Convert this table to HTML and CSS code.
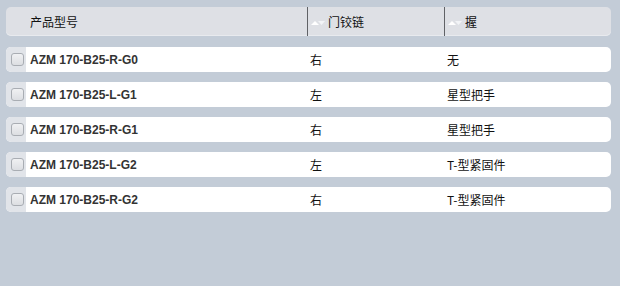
FILE: index.html
```html
<!DOCTYPE html>
<html lang="zh">
<head>
<meta charset="utf-8">
<link rel="stylesheet" href="styles.css">
</head>
<body>
<div class="table">
  <div class="head">
    <div class="hcell first">产品型号</div>
    <div class="hcell sep"><svg class="sort" width="14" height="5" viewBox="0 0 14 5"><polygon points="0,5 4,1 8,5" fill="#ffffff"/><polygon points="7,1 14,1 10.5,5" fill="#f2f4f7"/></svg>门铰链</div>
    <div class="hcell sep"><svg class="sort" width="14" height="5" viewBox="0 0 14 5"><polygon points="0,5 4,1 8,5" fill="#ffffff"/><polygon points="7,1 14,1 10.5,5" fill="#f2f4f7"/></svg>握</div>
  </div>
  <div class="row"><div class="chk"><span class="box"></span></div><div class="cell name">AZM 170-B25-R-G0</div><div class="cell c2">右</div><div class="cell c3">无</div></div>
  <div class="row"><div class="chk"><span class="box"></span></div><div class="cell name">AZM 170-B25-L-G1</div><div class="cell c2">左</div><div class="cell c3">星型把手</div></div>
  <div class="row"><div class="chk"><span class="box"></span></div><div class="cell name">AZM 170-B25-R-G1</div><div class="cell c2">右</div><div class="cell c3">星型把手</div></div>
  <div class="row"><div class="chk"><span class="box"></span></div><div class="cell name">AZM 170-B25-L-G2</div><div class="cell c2">左</div><div class="cell c3">T-型紧固件</div></div>
  <div class="row"><div class="chk"><span class="box"></span></div><div class="cell name">AZM 170-B25-R-G2</div><div class="cell c2">右</div><div class="cell c3">T-型紧固件</div></div>
</div>
</body>
</html>
```
FILE: styles.css
```css
html, body {
  margin: 0;
  padding: 0;
  background: #c3ccd7;
  height: 100%;
}
body {
  font-family: "Liberation Sans", "Noto Sans CJK SC", sans-serif;
  font-size: 12px;
  color: #222;
}
.table {
  padding: 7px 9px 0 6px;
  display: flex;
  flex-direction: column;
  gap: 10px;
}
.head {
  display: grid;
  grid-template-columns: 301px 137px 167px;
  height: 29px;
  background: #dee0e5;
  border-radius: 5px;
  box-shadow: inset 0 -1px 0 #e8eaee;
  margin-bottom: 1px;
}
.hcell {
  display: flex;
  align-items: center;
  font-family: "Noto Sans CJK SC", sans-serif;
  font-size: 12px;
  color: #111;
}
.hcell.first {
  padding-left: 24px;
}
.hcell.sep {
  border-left: 1px solid #606266;
  padding-left: 3px;
}
.sort {
  margin-right: 3px;
  margin-top: 1px;
}
.row {
  display: grid;
  grid-template-columns: 20px 281px 137px 167px;
  height: 25px;
  background: #fff;
  border-radius: 5px;
  overflow: hidden;
}
.chk {
  background: #e1e4e9;
  display: flex;
  align-items: center;
  justify-content: center;
  padding-left: 2px;
}
.box {
  width: 11px;
  height: 11px;
  border: 1px solid #a9adb3;
  border-radius: 3px;
  background: linear-gradient(#f0f1f3, #dcdee2);
}
.cell {
  display: flex;
  align-items: center;
}
.name {
  padding-left: 4px;
  font-weight: bold;
  font-size: 12px;
  color: #333;
}
.c2, .c3 {
  padding-left: 3px;
  font-family: "Noto Sans CJK SC", sans-serif;
  font-size: 12px;
  color: #111;
}
```
